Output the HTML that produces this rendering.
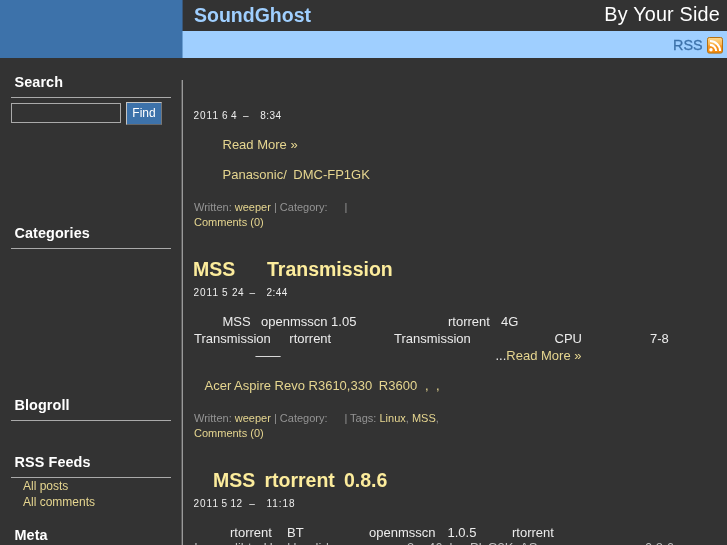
<!DOCTYPE html>
<html><head><meta charset="utf-8"><title>SoundGhost</title>
<style>
html,body{margin:0;padding:0;}
body{width:727px;height:545px;overflow:hidden;background:#333;color:#fff;font-family:"Liberation Sans","Noto Sans CJK SC",sans-serif;font-size:12px;position:relative;}
a{color:#e6d690;text-decoration:none;}
#corner{position:absolute;left:0;top:0;width:182px;height:58px;background:#3d72aa;}
#cedge{position:absolute;left:182px;top:31px;width:1px;height:27px;background:#6a9fd4;}
#cedge2{position:absolute;left:182px;top:0;width:1px;height:31px;background:#385678;}
#head{position:absolute;left:183px;top:0;width:544px;height:31px;background:#333;}
#title{position:absolute;left:11px;top:3px;font-size:19.5px;font-weight:bold;color:#9fcfff;line-height:24px;white-space:nowrap;}
#tag{position:absolute;right:7px;top:2px;font-size:19.8px;letter-spacing:.2px;color:#fff;line-height:24px;white-space:nowrap;}
#bar{position:absolute;left:183px;top:31px;width:544px;height:27px;background:#9fcfff;}
#rss{position:absolute;left:490px;top:5px;font-size:14.4px;line-height:18px;color:#3d72aa;-webkit-text-stroke:.3px #3d72aa;}
#rssicon{position:absolute;left:524px;top:6px;width:16px;height:17px;}
#vline{position:absolute;left:181px;top:80px;width:2px;height:470px;background:linear-gradient(90deg,#5a5a5a 0,#5a5a5a 50%,#9a9a9a 50%,#9a9a9a 100%);}
.sh{position:absolute;left:14.5px;font-size:14.4px;letter-spacing:.1px;font-weight:bold;color:#fff;line-height:17px;white-space:nowrap;}
.hr{position:absolute;left:11px;width:160px;height:1px;background:#aaa;}
.sl{position:absolute;left:23px;font-size:12px;line-height:14px;color:#e6d690;white-space:nowrap;}
#q{position:absolute;left:11px;top:103px;width:108px;height:18px;border:1px solid #aaa;background:#333;}
#find{position:absolute;left:126px;top:102px;width:34px;height:21px;border:1px solid #c4c4c4;border-right-color:#777;border-bottom-color:#666;background:#3d72aa;color:#fff;font-size:12px;line-height:20px;text-align:center;}
.t{position:absolute;left:0;white-space:nowrap;}
.t span{position:absolute;top:0;white-space:nowrap;}
.meta{font-size:11px;line-height:13px;color:#949494;}
.date{font-size:10px;letter-spacing:.44px;color:#eee;line-height:13px;}
.p{font-size:13px;line-height:15px;color:#ececec;}
.h2{font-size:19.5px;font-weight:bold;color:#fcec9c;line-height:22px;}
.y{color:#e6d690;}
.d{color:#bdbdbd;}
.t span.yr{letter-spacing:.95px;}
.g{display:inline-block;}
#wrap{position:absolute;left:0;top:0;width:727px;height:545px;overflow:hidden;will-change:transform;}
</style></head><body>
<div id="wrap"><div id="corner"></div><div id="cedge2"></div>
<div id="head"><div id="title">SoundGhost</div><div id="tag">By Your Side</div></div>
<div id="bar"><div id="rss">RSS</div>
<svg id="rssicon" viewBox="0 0 16 17"><defs><linearGradient id="og" x1="0" y1="0" x2="0" y2="1"><stop offset="0" stop-color="#fcd98e"/><stop offset=".45" stop-color="#fab550"/><stop offset=".55" stop-color="#f7941d"/><stop offset="1" stop-color="#f38b0d"/></linearGradient></defs><rect x="0.5" y="0.5" width="15" height="15.6" rx="1.8" fill="url(#og)" stroke="#b37013"/><circle cx="4" cy="12.8" r="1.7" fill="#fff"/><path d="M3 7.9a6.2 6.2 0 0 1 6.2 6.2" fill="none" stroke="#fff" stroke-width="2.1"/><path d="M3 4a10.1 10.1 0 0 1 10.1 10.1" fill="none" stroke="#fff" stroke-width="2.1"/></svg>
</div><div id="cedge"></div>
<div id="vline"></div>

<div class="sh" style="top:74px">Search</div><div class="hr" style="top:97px"></div>
<div id="q"></div><div id="find">Find</div>
<div class="sh" style="top:225px">Categories</div><div class="hr" style="top:248px"></div>
<div class="sh" style="top:397px">Blogroll</div><div class="hr" style="top:420px"></div>
<div class="sh" style="top:454px">RSS Feeds</div><div class="hr" style="top:477px"></div>
<div class="sl" style="top:479px">All posts</div>
<div class="sl" style="top:495px">All comments</div>
<div class="sh" style="top:527px">Meta</div>

<div class="t date" style="top:109px"><span class="yr" style="left:193.6px">2011</span><span style="left:222px">6</span><span style="left:231px">4</span><span style="left:243px">–</span><span style="left:260.3px">8:34</span></div>
<div class="t p y" style="top:137px"><span style="left:222.5px">Read More »</span></div>
<div class="t p y" style="top:167px"><span style="left:222.5px">Panasonic/</span><span style="left:293.3px">DMC-FP1GK</span></div>
<div class="t meta" style="top:201px"><span style="left:194px">Written: <a>weeper</a> | Category:</span><span style="left:344.4px">|</span></div>
<div class="t meta y" style="top:216px"><span style="left:194px">Comments (0)</span></div>
<div class="t h2" style="top:258px"><span style="left:193px">MSS</span><span style="left:267px">Transmission</span></div>
<div class="t date" style="top:286px"><span class="yr" style="left:193.6px">2011</span><span style="left:222px">5</span><span style="left:232px">24</span><span style="left:249.5px">–</span><span style="left:266.5px">2:44</span></div>
<div class="t p" style="top:314px"><span style="left:222.5px">MSS</span><span style="left:261px">openmsscn 1.05</span><span style="left:448px">rtorrent</span><span style="left:501px">4G</span></div>
<div class="t p" style="top:331px"><span style="left:194px">Transmission</span><span style="left:289.3px">rtorrent</span><span style="left:394px">Transmission</span><span style="left:554.5px">CPU</span><span style="left:650px">7-8</span></div>
<div class="t p" style="top:348px"><span style="left:255.5px"><i style="font-style:normal;font-size:12.6px">——</i></span><span style="left:495.5px">...<a>Read More »</a></span></div>
<div class="t p y" style="top:378px"><span style="left:204.5px">Acer Aspire Revo R3610,330</span><span style="left:378.8px">R3600</span><span style="left:425px">,</span><span style="left:436px">,</span></div>
<div class="t meta" style="top:412px"><span style="left:194px">Written: <a>weeper</a> | Category:</span><span style="left:344.4px">| Tags: <a>Linux</a>, <a>MSS</a>,</span></div>
<div class="t meta y" style="top:427px"><span style="left:194px">Comments (0)</span></div>
<div class="t h2" style="top:469px"><span style="left:213px">MSS</span><span style="left:264.4px">rtorrent</span><span style="left:344px">0.8.6</span></div>
<div class="t date" style="top:497px"><span class="yr" style="left:193.6px">2011</span><span style="left:221.6px">5</span><span style="left:230.5px">12</span><span style="left:249.2px">–</span><span class="yr" style="left:266.4px">11:18</span></div>
<div class="t p" style="top:525px"><span style="left:230px">rtorrent</span><span style="left:287px">BT</span><span style="left:369px">openmsscn</span><span style="left:447.5px">1.0.5</span><span style="left:512px">rtorrent</span></div>
<div class="t p d" style="top:540px"><span style="left:194.5px">b</span><span style="left:235px">libt</span><span style="left:263.5px">H</span><span style="left:287.2px">l</span><span style="left:293.4px">l</span><span style="left:315.6px">li</span><span style="left:326px">l</span><span style="left:407px">3.</span><span style="left:428px">46</span><span style="left:449.5px">l</span><span style="left:470px">Pl</span><span style="left:487.5px">G3K</span><span style="left:520px">AS</span><span style="left:645px">0.8.6</span></div>
</div></body></html>
